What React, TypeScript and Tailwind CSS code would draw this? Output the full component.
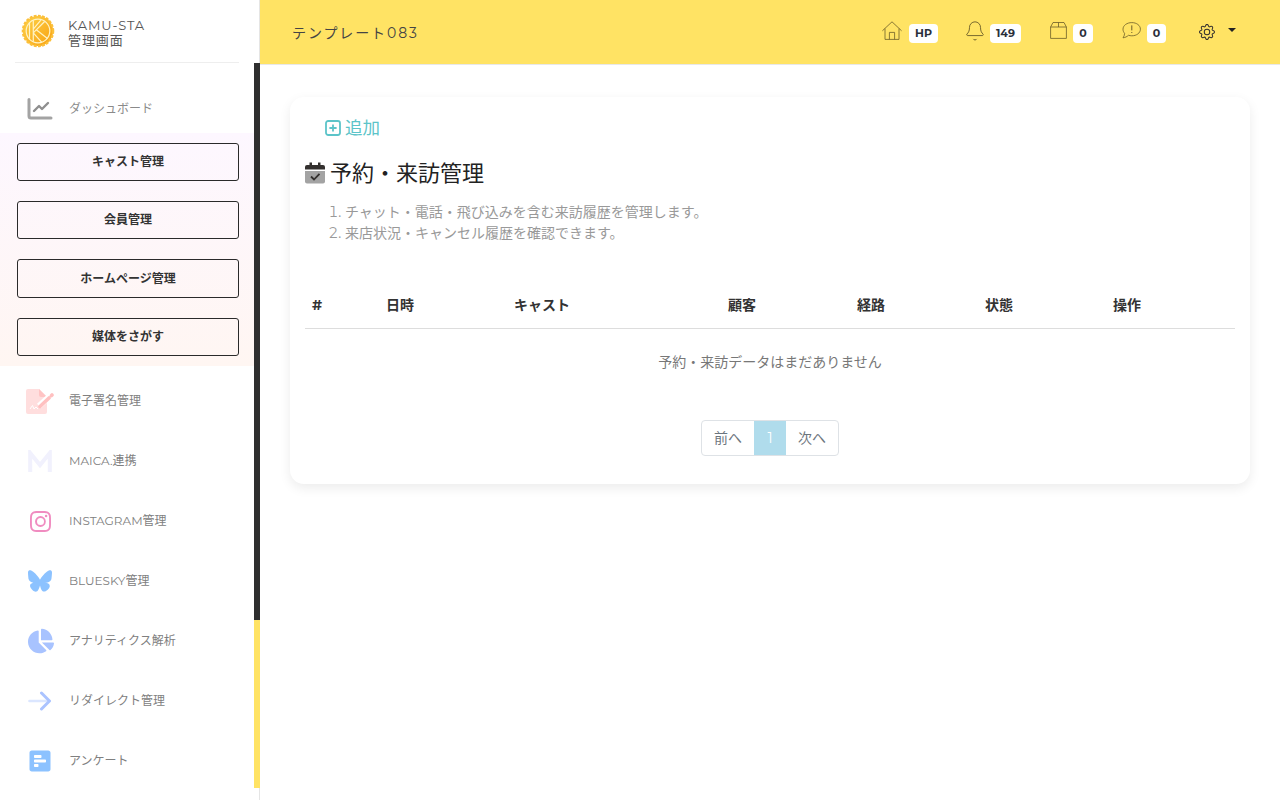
import React from 'react';
import { BsGear, BsInstagram } from 'react-icons/bs';
import { FaBluesky } from 'react-icons/fa6';
import { FaChartPie, FaPollH } from 'react-icons/fa';
import { Bell } from 'lucide-react';

const font = 'font-["Montserrat","Inter","Noto_Sans_CJK_JP","Noto_Sans",sans-serif]';

const Logo = () => (
  <svg width="34" height="34" viewBox="0 0 36 36">
    <defs>
      <linearGradient id="logoGold" x1="0" y1="0" x2="1" y2="1">
        <stop offset="0" stopColor="#fcd34a" />
        <stop offset="1" stopColor="#f9a010" />
      </linearGradient>
    </defs>
    <circle cx="18" cy="18" r="16" fill="url(#logoGold)" stroke="#fcc03a" strokeWidth="2.5" strokeDasharray="3 1.4" />
    <g fill="none" stroke="#fff3c4" strokeWidth="1.3">
      <circle cx="18" cy="18" r="12.5" />
      <path d="M9 9 L9 27 M13 6.5 L13 29.5 M13 20 L25 8 M13 16 L21 6.5 M16.5 17 L28 26 M13 20 L22 30" />
    </g>
  </svg>
);

const ChartIcon = () => (
  <svg width="26" height="22" viewBox="0 0 26 22">
    <path d="M2 1.5 V18 a2 2 0 0 0 2 2 H24" fill="none" stroke="#a3a3a3" strokeWidth="3" strokeLinecap="round" />
    <path d="M7 13 L12 8 L15 11 L21 5" fill="none" stroke="#8f8f8f" strokeWidth="2.4" strokeLinecap="round" strokeLinejoin="round" />
  </svg>
);

const SignIcon = () => (
  <svg width="28" height="25" viewBox="0 0 28 25">
    <path d="M2 0 H13 L21 8 V23 a2 2 0 0 1 -2 2 H2 a2 2 0 0 1 -2 -2 V2 a2 2 0 0 1 2 -2 Z" fill="#ffdede" />
    <path d="M13 0 L21 8 H15 a2 2 0 0 1 -2 -2 Z" fill="#ffc4c4" />
    <path d="M4 20 L6.5 16.5 L8 20 L10 18 L12 20" fill="none" stroke="#ffffff" strokeWidth="1" />
    <path d="M13 17 L23 8" stroke="#ffffff" strokeWidth="6" />
    <path d="M14 17.5 L23 9 M25.5 6.5 L26 6" stroke="#ffc0c0" strokeWidth="3.6" strokeLinecap="round" />
  </svg>
);

const MIcon = () => (
  <svg width="24" height="22" viewBox="0 0 24 22">
    <path d="M2.2 22 V3 L12 15 L21.8 3 V22" fill="none" stroke="#f1f1fd" strokeWidth="4" strokeLinejoin="miter" />
  </svg>
);

const ArrowIcon = () => (
  <svg width="24" height="20" viewBox="0 0 24 20">
    <path d="M1.5 10 H20" stroke="#dbe6ff" strokeWidth="2.6" strokeLinecap="round" />
    <path d="M13.5 2 L21.5 10 L13.5 18" fill="none" stroke="#aac3ff" strokeWidth="3" strokeLinecap="round" strokeLinejoin="round" />
  </svg>
);

const HouseIcon = () => (
  <svg width="20" height="19" viewBox="0 0 20 19" fill="none" stroke="#6b5d28" strokeWidth="0.8">
    <path d="M.4 9.8 L10 .8 L19.6 9.8 M3 7.6 V18.4 H17 V7.6 M7.4 18.4 V11.4 H12.6 V18.4" />
  </svg>
);

const BoxIcon = () => (
  <svg width="17" height="17" viewBox="0 0 17 17" fill="none" stroke="#6b5d28" strokeWidth="0.8">
    <path d="M3 .5 H14 L16.4 5 V16.4 H.6 V5 Z M.6 5 H16.4 M8.5 .5 V5" />
  </svg>
);

const ChatIcon = () => (
  <svg width="19" height="17" viewBox="0 0 19 17" fill="none" stroke="#6b5d28" strokeWidth="0.8">
    <path d="M9.8 .6 C14.6 .6 18.4 3.4 18.4 7.2 C18.4 11 14.6 13.8 9.8 13.8 C8.6 13.8 7.5 13.6 6.5 13.3 C5 14.7 3 15.6 1 15.8 C2 14.6 2.5 13.3 2.6 11.3 C1.6 10.2 1 8.8 1 7.2 C1 3.4 5 .6 9.8 .6 Z" />
    <path d="M9.8 3.4 V8.4 M9.8 10 V11" strokeWidth="1" />
  </svg>
);

const CalendarIcon = () => (
  <svg width="20" height="22" viewBox="0 0 20 22">
    <path d="M0 9 H20 V19.5 a2 2 0 0 1 -2 2 H2 a2 2 0 0 1 -2 -2 Z" fill="#a3a3a3" />
    <path d="M0 7.5 V5 a2 2 0 0 1 2 -2 H4.5 V.5 H7 V3 H13 V.5 H15.5 V3 H18 a2 2 0 0 1 2 2 V7.5 Z" fill="#33302e" />
    <path d="M6 14.5 L9 17.5 L14.5 11.8" fill="none" stroke="#33302e" strokeWidth="1.8" />
  </svg>
);

const PlusSquare = () => (
  <svg width="16" height="16" viewBox="0 0 16 16" fill="none" stroke="#5cc4c9" strokeWidth="1.8">
    <rect x="1" y="1" width="14" height="14" rx="2.2" />
    <path d="M8 4.4 V11.6 M4.4 8 H11.6" />
  </svg>
);

const sections = [
  { label: 'キャスト管理', cls: 'h-[38px]' },
  { label: '会員管理', cls: 'mt-[20px] h-[38px]' },
  { label: 'ホームページ管理', cls: 'mt-[20px] h-[39px]' },
  { label: '媒体をさがす', cls: 'mt-[20px] h-[38px]' },
];

const menu = [
  { label: '電子署名管理', icon: <SignIcon /> },
  { label: 'MAICA.連携', icon: <MIcon /> },
  { label: 'INSTAGRAM管理', icon: <BsInstagram size={21} className="text-[#f08cc0]" /> },
  { label: 'BLUESKY管理', icon: <FaBluesky size={24} className="text-[#8cc2ff]" /> },
  { label: 'アナリティクス解析', icon: <FaChartPie size={26} className="ml-[2px] text-[#a8c3ff]" /> },
  { label: 'リダイレクト管理', icon: <ArrowIcon /> },
  { label: 'アンケート', icon: <FaPollH size={24} className="text-[#8cc2ff]" /> },
];

const topItems = [
  { icon: <HouseIcon />, badge: 'HP', cls: 'mr-[26px]', gap: 'ml-[7px]', w: 'w-[29px]' },
  { icon: <Bell size={22} strokeWidth={1} className="text-[#6b5d28]" />, badge: '149', cls: 'mr-[29px]', gap: 'ml-[4px]', w: 'w-[31px]' },
  { icon: <BoxIcon />, badge: '0', cls: 'mr-[29px]', gap: 'ml-[6px]', w: 'w-[20px]' },
  { icon: <ChatIcon />, badge: '0', cls: 'mr-[33px]', gap: 'ml-[6px]', w: 'w-[19px]' },
];

const columns = [
  { label: '#', w: 'w-[74px]' },
  { label: '日時', w: 'w-[128px]' },
  { label: 'キャスト', w: 'w-[214px]' },
  { label: '顧客', w: 'w-[129px]' },
  { label: '経路', w: 'w-[128px]' },
  { label: '状態', w: 'w-[128px]' },
  { label: '操作', w: 'w-[129px]' },
];

export default function App() {
  return (
    <div className={`flex h-[800px] w-[1280px] overflow-hidden bg-white ${font}`}>
      <aside className="flex h-full w-[260px] shrink-0 border-r border-[#e5e5e5]">
        <div className="w-[254px] shrink-0">
          <div className="mx-[15px] flex h-[63px] items-center gap-[13px] border-b border-[#eeeeee] pl-[6px]">
            <Logo />
            <div className="pt-[3px] text-[13px] leading-[15px] tracking-[0.9px] text-[#555555]">
              <div>KAMU-STA</div>
              <div>管理画面</div>
            </div>
          </div>
          <div className="flex h-[70px] items-center pt-[22px]">
            <div className="flex w-[69px] shrink-0 justify-center pl-[11px]"><ChartIcon /></div>
            <span className="text-[12px] text-[#8a8a8a]">ダッシュボード</span>
          </div>
          <div className="h-[233px] bg-gradient-to-b from-[#fdf7ff] to-[#fff6f2] pl-[17px] pr-[15px] pt-[10px]">
            {sections.map((s) => (
              <div key={s.label} className={`flex items-center justify-center rounded-[3px] border border-[#2a2a2a] text-[12px] font-bold text-[#333333] ${s.cls}`}>
                {s.label}
              </div>
            ))}
          </div>
          <div className="pt-[5px]">
            {menu.map((m) => (
              <div key={m.label} className="flex h-[60px] items-center">
                <div className="flex w-[69px] shrink-0 justify-center pl-[11px]">{m.icon}</div>
                <span className="text-[12px] text-[#808080]">{m.label}</span>
              </div>
            ))}
          </div>
        </div>
        <div className="w-[6px] shrink-0 pt-[63px]">
          <div className="h-[557px] bg-[#2f2f2f]" />
          <div className="h-[168px] bg-[#ffe364]" />
        </div>
      </aside>

      <div className="flex min-w-0 flex-1 flex-col">
        <header className="flex h-[65px] shrink-0 items-center justify-between border-b border-[#e8e8e8] bg-[#ffe364] pl-[32px] pr-[44px]">
          <div className="pt-[2px] text-[14px] tracking-[1.9px] text-[#444444]">テンプレート083</div>
          <div className="flex items-center">
            {topItems.map((t) => (
              <div key={t.badge + t.w} className={`flex items-center ${t.cls}`}>
                <div className="-mt-[3px] flex items-center">{t.icon}</div>
                <span className={`mt-[2px] flex h-[19px] items-center justify-center rounded-[4px] bg-white text-[11px] font-bold text-[#2b2f3a] ${t.gap} ${t.w}`}>{t.badge}</span>
              </div>
            ))}
            <div className="flex items-center">
              <BsGear size={16} className="text-[#33302e]" />
              <span className="mb-[5px] ml-[13px] h-0 w-0 border-x-[4px] border-t-[4px] border-x-transparent border-t-[#222222]" />
            </div>
          </div>
        </header>

        <main className="px-[30px] pt-[32px]">
          <div className="h-[387px] w-[960px] rounded-[14px] bg-white px-[15px] pt-[18px] shadow-[0_4px_12px_rgba(0,0,0,0.08)]">
            <div className="flex h-[26px] items-center gap-[4px] pl-[20px] text-[17.5px] text-[#5cc4c9]">
              <PlusSquare />
              <span>追加</span>
            </div>
            <div className="mt-[16px] flex h-[32px] items-center gap-[5px]">
              <CalendarIcon />
              <h1 className="text-[22px] font-normal text-[#222222]">予約・来訪管理</h1>
            </div>
            <ol className="mt-[13px] list-decimal pl-[40px] text-[14px] leading-[21px] text-[#999999]">
              <li>チャット・電話・飛び込みを含む来訪履歴を管理します。</li>
              <li>来店状況・キャンセル履歴を確認できます。</li>
            </ol>
            <table className="mt-[34px] w-[930px] table-fixed border-collapse">
              <thead>
                <tr className="h-[50px] border-b border-[#dddddd]">
                  {columns.map((c) => (
                    <th key={c.label} className={`pl-[7px] pt-[6px] text-left text-[14px] font-bold text-[#333333] ${c.w}`}>{c.label}</th>
                  ))}
                </tr>
              </thead>
              <tbody>
                <tr className="h-[68px]">
                  <td colSpan={7} className="text-center text-[14px] text-[#777777]">予約・来訪データはまだありません</td>
                </tr>
              </tbody>
            </table>
            <div className="mt-[24px] flex justify-center">
              <div className="flex h-[36px] overflow-hidden rounded-[4px] border border-[#dee2e6] text-[14px] text-[#6c757d]">
                <span className="flex w-[52px] items-center justify-center">前へ</span>
                <span className="flex w-[32px] items-center justify-center bg-[#b0dcec] text-white">1</span>
                <span className="flex w-[52px] items-center justify-center">次へ</span>
              </div>
            </div>
          </div>
        </main>
      </div>
    </div>
  );
}
